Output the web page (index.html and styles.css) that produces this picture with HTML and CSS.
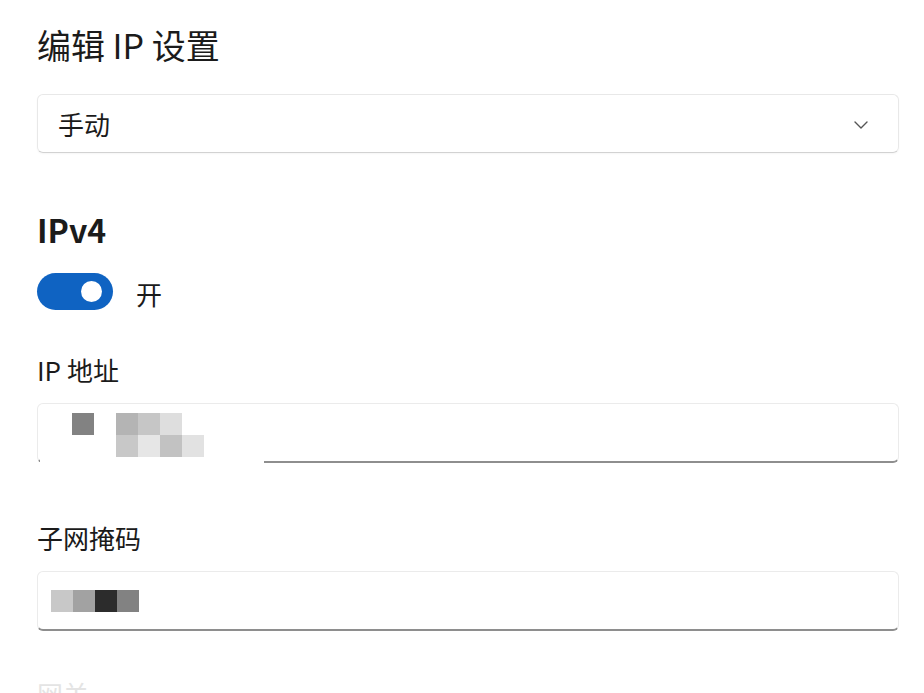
FILE: index.html
```html
<!DOCTYPE html>
<html lang="zh-CN">
<head>
  <meta charset="UTF-8">
  <title>编辑 IP 设置</title>
  <link rel="stylesheet" href="styles.css">
</head>
<body>
  <div class="panel">
    <h1 class="title">编辑 IP 设置</h1>

    <div class="select">
      <span>手动</span>
      <svg class="chevron" width="14" height="8" viewBox="0 0 14 8"><path d="M1 1l6 6 6-6" fill="none" stroke="#555" stroke-width="1.4" stroke-linecap="round" stroke-linejoin="round"/></svg>
    </div>

    <h2 class="section">IPv4</h2>
    <div class="switch-row">
      <div class="switch"><div class="knob"></div></div>
      <span class="state">开</span>
    </div>

    <div class="field">
      <label>IP 地址</label>
      <div class="input ip">
        <div class="mosaic">
          <div class="px dark"></div>
          <div class="grid">
            <i style="background:#b4b4b4"></i><i style="background:#c6c6c6"></i><i style="background:#dedede"></i><i style="background:#fff"></i>
            <i style="background:#c8c8c8"></i><i style="background:#e6e6e6"></i><i style="background:#c2c2c2"></i><i style="background:#e2e2e2"></i>
          </div>
        </div>
      </div>
    </div>

    <div class="field">
      <label class="mask-label">子网掩码</label>
      <div class="input mask">
        <div class="row-px">
          <i style="background:#c8c8c8"></i><i style="background:#a2a2a2"></i><i style="background:#2c2c2c"></i><i style="background:#828282"></i>
        </div>
      </div>
    </div>

    <div class="field">
      <label class="faded">网关</label>
    </div>
  </div>
</body>
</html>
```

FILE: styles.css
```css
html, body {
  margin: 0;
  background: #fff;
  overflow: hidden;
}
body {
  font-family: "Noto Sans CJK SC", "Noto Sans", sans-serif;
  color: #1b1b1b;
}
.panel {
  width: 862px;
  padding: 21px 0 0 37px;
}
.title {
  margin: 0;
  font-size: 34px;
  font-weight: 400;
  line-height: 48px;
}
.select {
  margin-top: 25px;
  height: 57px;
  border: 1px solid #e8e8e8;
  border-bottom-color: #d2d2d2;
  border-radius: 6px;
  display: flex;
  align-items: center;
  justify-content: space-between;
  padding: 0 30px 0 20px;
  font-size: 26px;
  box-shadow: 0 1px 2px rgba(0,0,0,0.04);
}
.chevron {
  margin-top: 2px;
}
.section {
  margin: 56px 0 0;
  font-size: 32px;
  font-weight: 600;
  line-height: 40px;
}
.switch-row {
  margin-top: 20px;
  display: flex;
  align-items: center;
  gap: 23px;
  font-size: 26px;
  line-height: 38px;
}
.switch-row .state {
  margin-top: 6px;
}
.switch {
  width: 76px;
  height: 37px;
  border-radius: 19px;
  background: #0f63c2;
  display: flex;
  align-items: center;
  justify-content: flex-end;
  padding-right: 11px;
  box-sizing: border-box;
}
.knob {
  width: 21px;
  height: 21px;
  border-radius: 50%;
  background: #fff;
}
.field {
  display: flex;
  flex-direction: column;
}
.field label {
  font-size: 26px;
  line-height: 34px;
  margin-top: 40px;
}
.field .mask-label {
  margin-top: 58px;
}
.field .faded {
  color: #e4e4e4;
  margin-top: 46px;
}
.input {
  margin-top: 16px;
  height: 57px;
  border: 1px solid #ebebeb;
  border-bottom: 2px solid #8e8e8e;
  border-radius: 6px;
  position: relative;
  display: flex;
  align-items: center;
}
.input.ip::after {
  content: "";
  position: absolute;
  left: 2px;
  bottom: -3px;
  width: 224px;
  height: 5px;
  background: #fff;
}
.input.mask {
  margin-top: 16px;
}
.mosaic {
  display: flex;
  align-items: flex-start;
  gap: 22px;
  padding-left: 34px;
  margin-top: 9px;
  align-self: flex-start;
}
.px.dark {
  width: 22px;
  height: 22px;
  background: #828282;
}
.grid {
  display: grid;
  grid-template-columns: repeat(4, 22px);
  grid-auto-rows: 22px;
}
.row-px {
  display: flex;
  padding-left: 13px;
}
.grid i, .row-px i {
  display: block;
  width: 22px;
  height: 22px;
}
```
